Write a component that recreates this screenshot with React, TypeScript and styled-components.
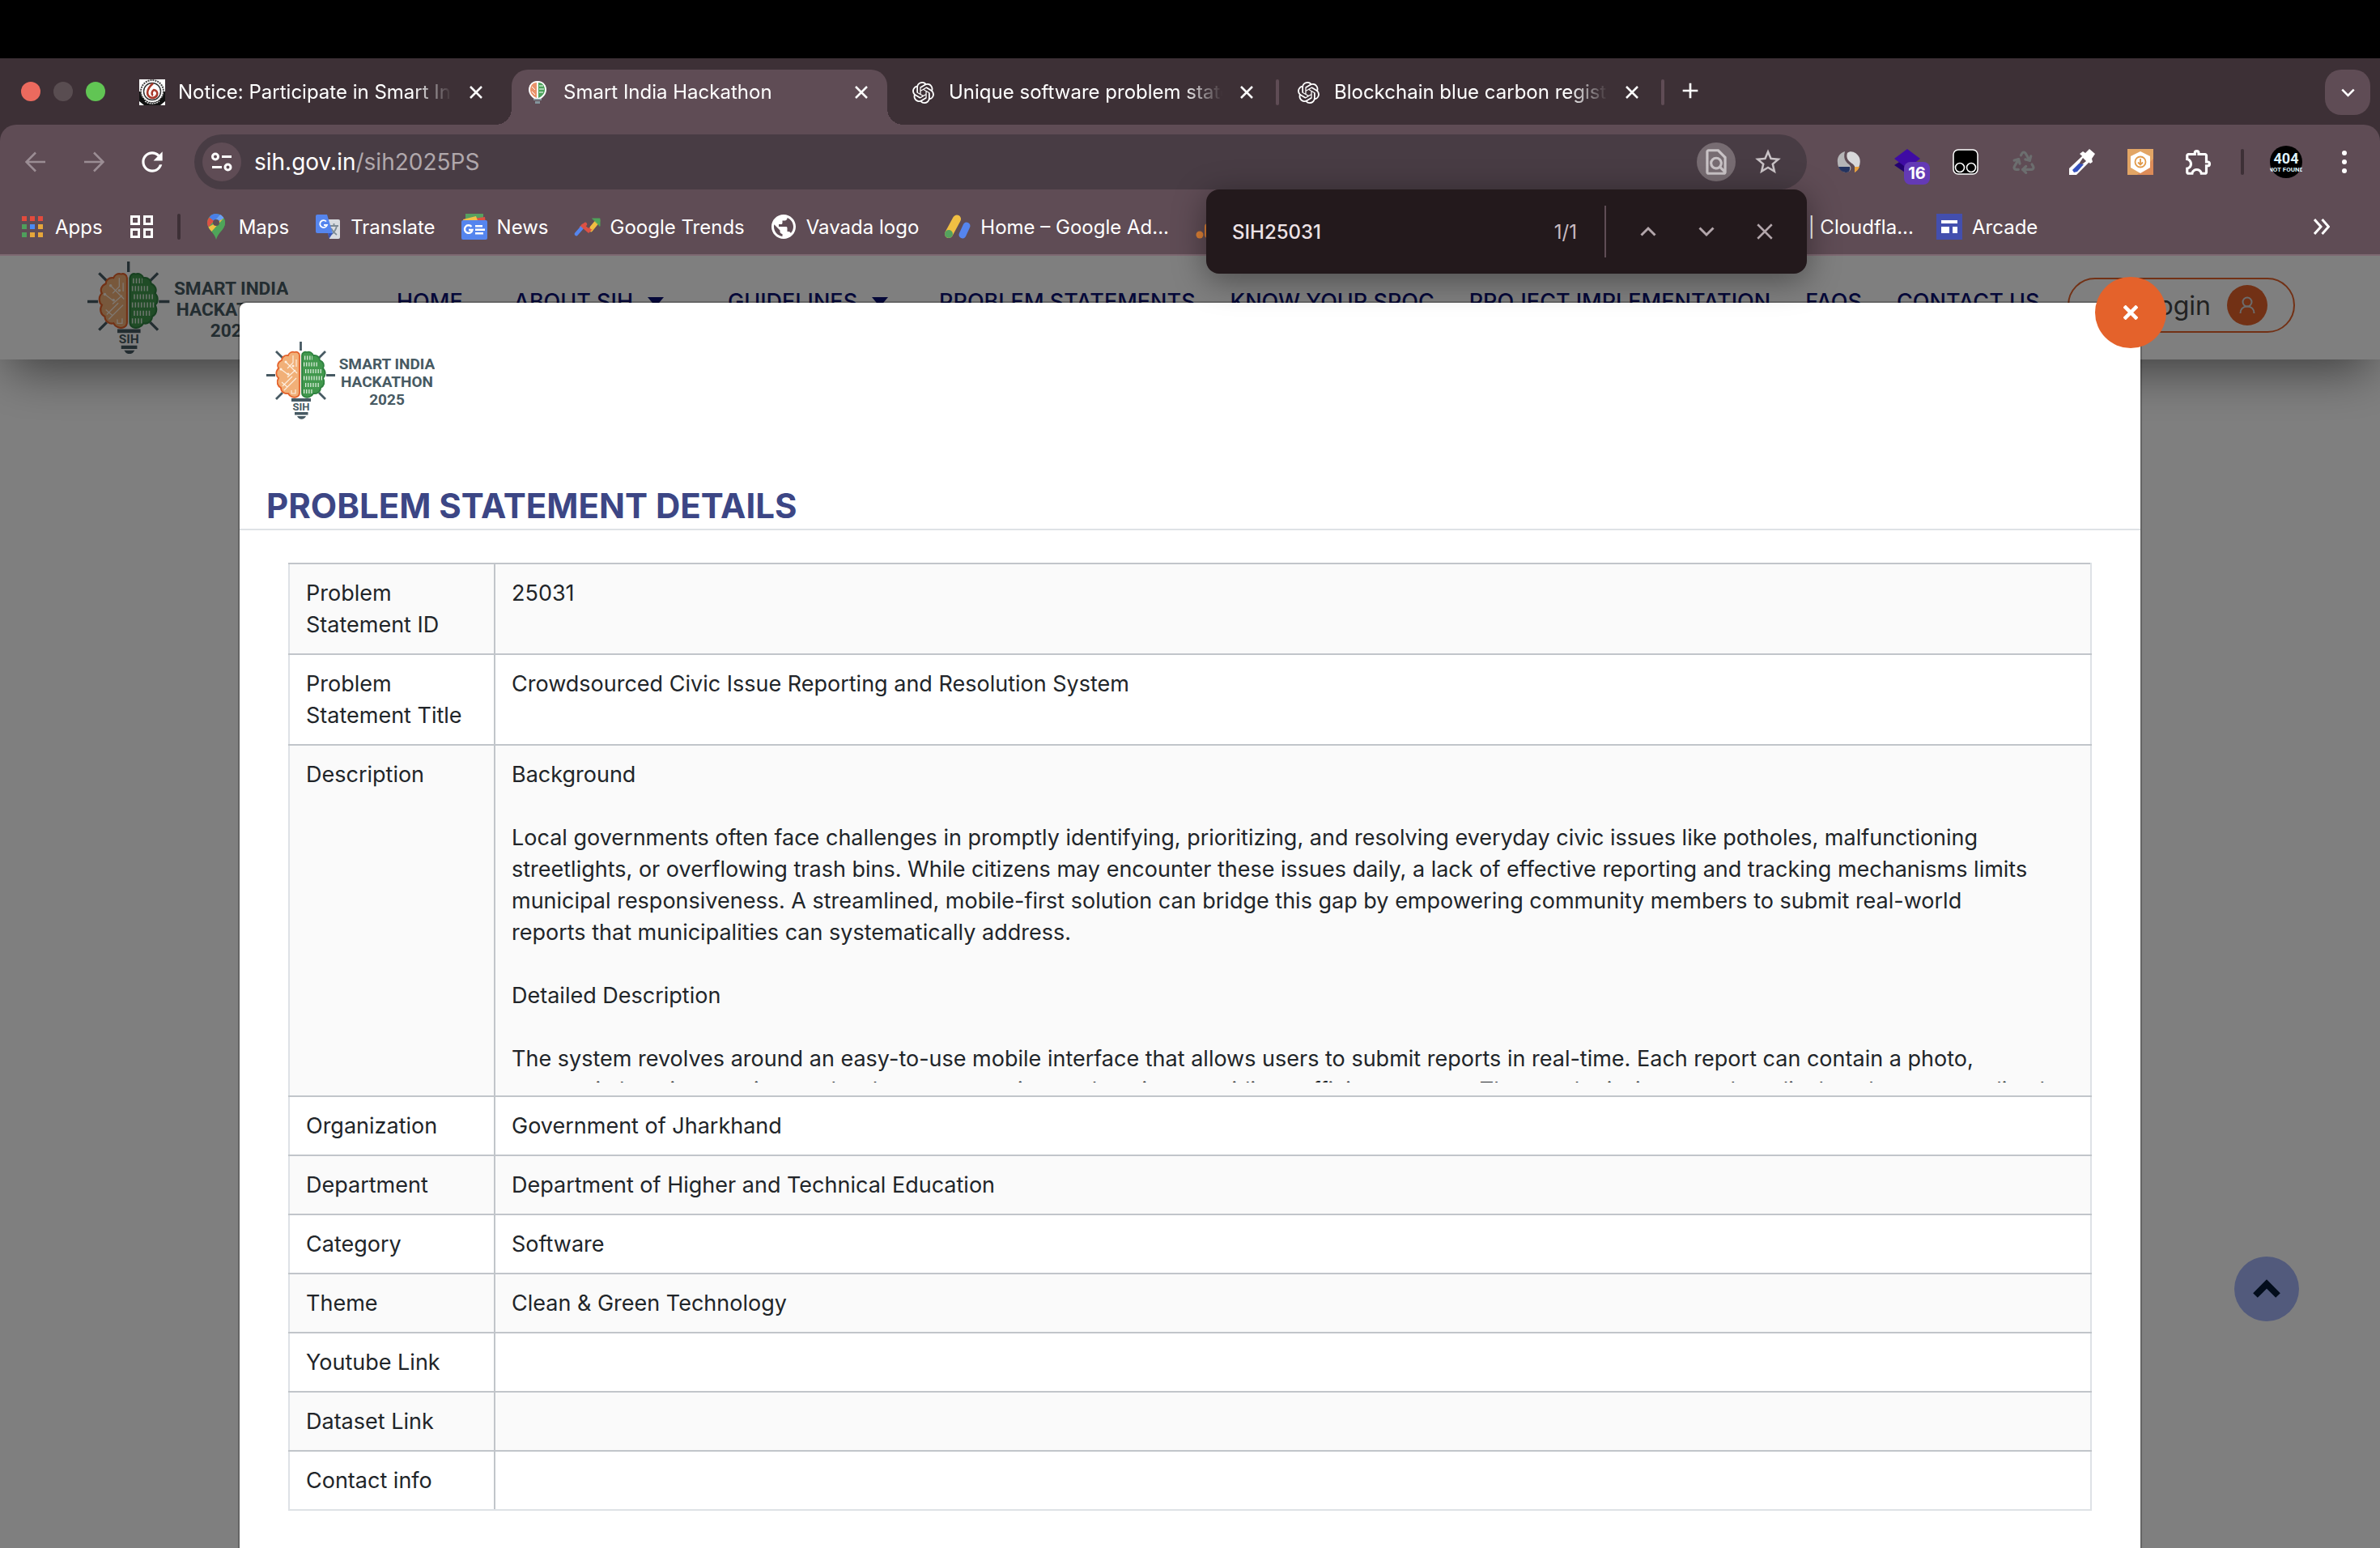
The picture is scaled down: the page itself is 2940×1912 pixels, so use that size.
import React from "react";
import styled, { createGlobalStyle, css } from "styled-components";
import { MdAdd, MdOutlineFindInPage, MdPublic, MdRefresh, MdStarBorder, MdOutlineExtension } from "react-icons/md";
import { SiOpenai } from "react-icons/si";
import { Recycle } from "lucide-react";

const color = {
  strip: "#3d3036",
  bar: "#5f4c55",
  field: "#483c44",
  find: "#23191c",
  line: "#c1c5ca",
  softLine: "#dee2e6",
  ink: "#212529",
  navy: "#0a1172",
  orange: "#e4622b",
};

const GlobalStyle = createGlobalStyle`
  *, *::before, *::after { box-sizing: border-box; }
  body {
    margin: 0;
    background: #000;
    font-family: Inter, "Liberation Sans", sans-serif;
    overflow: hidden;
  }
  button, input { font: inherit; color: inherit; }
  svg { display: block; flex: none; }
`;

const Screen = styled.div`
  height: 100vh;
  display: flex;
  flex-direction: column;
  padding-top: 72px;
`;

const bareButton = css`
  border: 0;
  padding: 0;
  margin: 0;
  background: none;
  display: flex;
  align-items: center;
  justify-content: center;
  flex: none;
`;

/* ---------- browser window ---------- */

const Browser = styled.header`
  position: relative;
  z-index: 2;
  background: ${color.strip};
  color: #fff;
  font-size: 24px;
`;

const TabStrip = styled.div`
  height: 82px;
  display: flex;
  align-items: flex-end;
  padding: 0 12px 0 26px;
`;

const Lights = styled.div`
  height: 82px;
  width: 130px;
  display: flex;
  align-items: center;
  gap: 16px;
`;

const Light = styled.button<{ $fill: string }>`
  ${bareButton}
  width: 24px;
  height: 24px;
  border-radius: 50%;
  background: ${(p) => p.$fill};
`;

const Tab = styled.div<{ $active?: boolean }>`
  position: relative;
  width: 464px;
  height: 68px;
  padding: 0 22px 12px 16px;
  display: flex;
  align-items: center;
  border-radius: 20px 20px 0 0;
  background: ${(p) => (p.$active ? color.bar : "transparent")};
  ${(p) =>
    p.$active &&
    css`
      &::before,
      &::after {
        content: "";
        position: absolute;
        bottom: 0;
        width: 20px;
        height: 20px;
      }
      &::before {
        right: 100%;
        background: radial-gradient(circle at 0 0, transparent 20px, ${color.bar} 20px);
      }
      &::after {
        left: 100%;
        background: radial-gradient(circle at 100% 0, transparent 20px, ${color.bar} 20px);
      }
    `}
`;

const TabTitle = styled.a`
  flex: 1;
  min-width: 0;
  margin: 0 20px 0 16px;
  color: #fff;
  text-decoration: none;
  white-space: nowrap;
  overflow: hidden;
  line-height: 32px;
  mask-image: linear-gradient(to right, #000 calc(100% - 48px), transparent);
`;

const IconBox = styled.span`
  width: 32px;
  height: 32px;
  flex: none;
  display: flex;
  align-items: center;
  justify-content: center;
`;

const SmallButton = styled.button`
  ${bareButton}
  width: 20px;
  height: 32px;
`;

const TabGap = styled.span<{ $visible?: boolean }>`
  width: 4px;
  height: 32px;
  margin: 0 4px 24px;
  border-radius: 2px;
  background: ${(p) => (p.$visible ? color.bar : "transparent")};
`;

const NewTab = styled.button`
  ${bareButton}
  width: 56px;
  height: 56px;
  margin-bottom: 14px;
`;

const TabSearch = styled.button`
  ${bareButton}
  width: 56px;
  height: 56px;
  margin: 0 0 12px auto;
  border-radius: 20px;
  background: ${color.bar};
`;

const Toolbar = styled.div`
  height: 92px;
  display: flex;
  align-items: center;
  padding: 0 24px 0 8px;
  border-radius: 20px 20px 0 0;
  background: ${color.bar};
`;

const NavButton = styled.button<{ $dim?: boolean }>`
  ${bareButton}
  width: 72px;
  height: 68px;
  color: ${(p) => (p.$dim ? "#9b8d94" : "#fff")};
`;

const AddressField = styled.div`
  flex: 1;
  height: 68px;
  margin: 0 16px;
  padding: 0 30px 0 10px;
  display: flex;
  align-items: center;
  border-radius: 34px;
  background: ${color.field};
`;

const RoundButton = styled.button<{ $fill?: string }>`
  ${bareButton}
  width: 48px;
  height: 48px;
  border-radius: 50%;
  color: #c9c3c6;
  background: ${(p) => p.$fill || "transparent"};
`;

const Address = styled.a`
  flex: 1;
  margin-left: 16px;
  font-size: 28px;
  color: #fff;
  text-decoration: none;
  span { color: #b0a8ac; }
`;

const FieldActions = styled.div`
  display: flex;
  align-items: center;
  gap: 22px;
  button:last-child { width: 36px; }
`;

const Extensions = styled.div`
  display: flex;
  align-items: center;
  margin-right: 16px;
`;

const Extension = styled.button`
  ${bareButton}
  position: relative;
  width: 72px;
  height: 68px;
`;

const Badge = styled.span`
  position: absolute;
  left: 32px;
  top: 34px;
  width: 32px;
  height: 28px;
  border-radius: 8px;
  background: #643ab5;
  font-size: 20px;
  line-height: 28px;
  font-weight: 700;
  text-align: center;
`;

const BarDivider = styled.span`
  width: 4px;
  height: 32px;
  border-radius: 2px;
  background: ${color.strip};
`;

const Profile = styled.button`
  ${bareButton}
  width: 104px;
  height: 68px;
`;

const MenuButton = styled.button`
  ${bareButton}
  width: 40px;
  height: 68px;
`;

const BookmarkBar = styled.nav`
  height: 70px;
  display: flex;
  align-items: center;
  padding: 0 62px 0 24px;
  background: ${color.bar};
  border-bottom: 2px solid #7e6972;
`;

const BookmarkGroup = styled.div`
  display: flex;
  align-items: center;
  gap: 32px;
`;

const BookmarkDivider = styled(BarDivider)`
  margin: 0 28px;
`;

const Bookmark = styled.a`
  display: flex;
  align-items: center;
  gap: 12px;
  color: #fff;
  text-decoration: none;
  white-space: nowrap;
`;

const BookmarkLabel = styled.span<{ $width?: number }>`
  width: ${(p) => (p.$width ? `${p.$width}px` : "auto")};
  text-align: right;
`;

const Overflow = styled.button`
  ${bareButton}
  width: 20px;
  height: 32px;
  margin-left: auto;
`;

const FindBar = styled.form`
  position: absolute;
  top: 162px;
  right: 708px;
  width: 742px;
  height: 104px;
  display: flex;
  align-items: center;
  padding: 0 16px 0 32px;
  border-radius: 16px;
  background: ${color.find};
  box-shadow: 0 8px 40px rgba(0, 0, 0, 0.4);
`;

const FindInput = styled.input`
  flex: 1;
  min-width: 0;
  border: 0;
  padding: 0;
  outline: 0;
  background: none;
  color: #eee3e6;
  font-weight: 500;
`;

const FindCount = styled.output`
  color: #c9bcc1;
`;

const FindDivider = styled.span`
  width: 2px;
  height: 64px;
  margin: 0 16px 0 34px;
  background: ${color.bar};
`;

const FindButton = styled.button`
  ${bareButton}
  width: 72px;
  height: 64px;
`;

/* ---------- web page ---------- */

const Page = styled.main`
  position: relative;
  flex: 1;
  min-height: 0;
  overflow: hidden;
  background: #fff;
`;

const SiteHeader = styled.div`
  height: 128px;
  display: flex;
  align-items: flex-start;
  padding: 7px 105px 0 108px;
  background: #fff;
  box-shadow: 0 25px 60px -12px rgba(0, 0, 0, 0.5);
`;

const SiteNav = styled.nav`
  flex: 1;
  min-width: 0;
  display: flex;
  gap: 43px;
  margin: 34px 0 0 134px;
`;

const NavLink = styled.a<{ $after?: number }>`
  display: flex;
  align-items: center;
  gap: 18px;
  margin-right: ${(p) => p.$after || 0}px;
  font-size: 27px;
  font-weight: 500;
  line-height: 32px;
  color: ${color.navy};
  text-decoration: none;
  white-space: nowrap;
`;

const Caret = styled.span`
  border: 10px solid transparent;
  border-top: 12px solid ${color.navy};
  border-bottom: 0;
`;

const Login = styled.a`
  width: 281px;
  height: 68px;
  margin-top: 20px;
  padding-right: 32px;
  flex: none;
  display: flex;
  align-items: center;
  justify-content: flex-end;
  gap: 20px;
  border: 2px solid ${color.orange};
  border-radius: 34px;
  font-size: 32px;
  color: #444;
  text-decoration: none;
`;

const LoginBadge = styled.span`
  width: 50px;
  height: 50px;
  border-radius: 50%;
  display: flex;
  align-items: center;
  justify-content: center;
  background: ${color.orange};
`;

const BackToTop = styled.a`
  position: absolute;
  right: 100px;
  bottom: 280px;
  width: 80px;
  height: 80px;
  border-radius: 50%;
  display: flex;
  align-items: center;
  justify-content: center;
  background: #a5b5f8;
`;

const Backdrop = styled.div`
  position: absolute;
  inset: 0;
  padding-top: 56px;
  background: rgba(0, 0, 0, 0.5);
`;

const Dialog = styled.section`
  position: relative;
  width: 80%;
  min-height: calc(100% + 40px);
  margin: 0 auto;
  border: 2px solid rgba(0, 0, 0, 0.2);
  border-radius: 10px;
  background: #fff;
  background-clip: padding-box;
`;

const DialogHeader = styled.div`
  padding: 48px 33px 4px;
  border-bottom: 2px solid ${color.softLine};
`;

const DialogTitle = styled.h2`
  margin: 83px 0 0;
  font-size: 42px;
  line-height: 48px;
  font-weight: 700;
  color: #3c4685;
`;

const CloseDialog = styled.button`
  ${bareButton}
  position: absolute;
  top: -32px;
  right: -32px;
  width: 88px;
  height: 88px;
  border-radius: 50%;
  background: ${color.orange};
`;

const DialogBody = styled.div`
  padding: 40px 60px;
`;

const Details = styled.table`
  width: 100%;
  border-collapse: collapse;
  table-layout: fixed;
  font-size: 27px;
  line-height: 39px;
  color: ${color.ink};
  tr:nth-child(odd) { background: #fafafa; }
  th, td {
    height: 73px;
    padding: 16px 20px;
    border: 2px solid ${color.line};
    font-weight: 400;
    text-align: left;
    vertical-align: top;
  }
  th { width: 254px; border-left-color: ${color.softLine}; }
  td { border-right-color: ${color.softLine}; }
  tr:last-child > * { border-bottom-color: ${color.softLine}; }
`;

const Description = styled.div`
  max-height: 400px;
  overflow: hidden;
  white-space: pre;
`;

/* ---------- drawings ---------- */

const CloseGlyph = ({ size = 16, stroke = "#fff", weight = 2.5 }: { size?: number; stroke?: string; weight?: number }) => (
  <svg width={size} height={size} viewBox="0 0 16 16" stroke={stroke} strokeWidth={weight} fill="none">
    <path d="M1 1l14 14M15 1L1 15" />
  </svg>
);

const Chevron = ({ down, stroke = "#fff", size = 20, weight = 3 }: { down?: boolean; stroke?: string; size?: number; weight?: number }) => (
  <svg width={size} height={size} viewBox="0 0 20 20" stroke={stroke} strokeWidth={weight} fill="none">
    <path d={down ? "M1.5 5.5l8.500 8.500 8.500-8.500" : "M1.500 14.500L10 6l8.500 8.500"} />
  </svg>
);

const Arrow = ({ right }: { right?: boolean }) => (
  <svg width="26" height="26" viewBox="0 0 26 26" stroke="currentColor" strokeWidth="2.6" fill="none">
    <path d={right ? "M1 13h23M13 1.500L24.500 13 13 24.500" : "M25 13H2M13 1.500L1.500 13 13 24.500"} />
  </svg>
);

const brain =
  "M41 17C41 14 38 12 35 13 31 12 28 14 27 17 22 16 19 20 19 23 14 25 13 30 15 33 11 37 12 43 15 45 12 50 14 55 18 57 18 62 23 65 27 64 29 68 34 70 38 68 40 67 41 65 41 63Z";

const SihBulb = () => (
  <>
    <g stroke="#475a63" strokeWidth="2.8">
      <path d="M42.500 0v11M0 41.500h11M74 41.500h11M12 12l8 8M73 12l-8 8M12 71l8-8M73 71l-8-8" />
    </g>
    <path d={brain} fill="#f1b078" stroke={color.orange} strokeWidth="1.8" />
    <path d="M33 17v9l-7 7M37 22v9M24 25l5 5 9 9M18 34l8 6M19 50l7 6M22 60l15-15M20 55l12-12M26 44l10-9M31 60v4h5v-5" stroke="#fdf0e2" strokeWidth="1.1" fill="none" />
    <g fill="#fdf0e2">
      <circle cx="24" cy="25" r="1.500" /><circle cx="18" cy="34" r="1.500" /><circle cx="33" cy="30" r="1.500" /><circle cx="27" cy="40" r="1.500" />
    </g>
    <path d={brain} transform="translate(85 0) scale(-1 1)" fill="#41984d" stroke="#2f8140" strokeWidth="1.800" />
    <g stroke="#d9ecd9" strokeWidth="5.200" strokeDasharray="1.300 1.800">
      <path d="M47 20h10M46 28h18M48 36.500h20M46 45h24M48 53.500h17M46 61.500h12" />
    </g>
    <path d="M31 70h24v4H31zM35 87h16.500v3.500H35zM38 92h11q-2 3.800-5.500 3.800T38 92z" fill="#475a63" />
  </>
);

const SihLogo = ({ width }: { width: number }) => (
  <svg width={width} viewBox="0 0 208 96" role="img" aria-label="Smart India Hackathon 2025">
    <SihBulb />
    <g fill="#475a63" fontFamily="Roboto, sans-serif" fontWeight="700" fontSize="19" textAnchor="middle">
      <text x="43" y="85" fontSize="13">SIH</text>
      <text x="149" y="34">SMART INDIA</text>
      <text x="149" y="56">HACKATHON</text>
      <text x="149" y="78">2025</text>
    </g>
  </svg>
);

const CollegeIcon = () => (
  <svg width="32" height="32" viewBox="0 0 32 32">
    <path fill="#fff" d="M0 0h32v32H0z" />
    <path fill="#111" d="M0 15h32v12l-6 5H6l-6-5z" />
    <circle cx="16" cy="15" r="14" fill="#fff" stroke="#444" strokeWidth="2" strokeDasharray="2 1" />
    <circle cx="16" cy="15" r="10.500" fill="#fff" stroke="#333" strokeWidth="1.500" />
    <path d="M17 5c-9 8-9 16-1 18 8-1 8-9 2-10-3 2-3 6-1 7" fill="none" stroke="#a8392b" strokeWidth="2.600" />
    <path d="M4 22c4 9 20 9 24 0l2 4-5 6H7l-5-6z" fill="#111" />
    <path d="M7 27c6 4 12 4 18 0" stroke="#ddd" strokeWidth="1.500" strokeDasharray="2 1" fill="none" />
  </svg>
);

const BulbIcon = () => (
  <svg width="32" height="32" viewBox="0 0 32 32">
    <path d="M16 2C8 2 5 8 5 13s4 9 7 11h8c3-2 7-6 7-11S24 2 16 2z" fill="#fff" />
    <path d="M15 4C9 4 7 9 7 13s3 8 8 10z" fill="#e8926a" />
    <path d="M17 4c6 0 8 5 8 9s-3 8-8 10z" fill="#4da35c" />
    <path d="M18 8h5M18 12h6M18 16h5M9 9l4 4M9 15l4 4" stroke="#fff" strokeWidth="1" />
    <path d="M11 24h10v2H11zM13 27h6v3h-6z" fill="#83959c" />
  </svg>
);

const AppsIcon = () => (
  <svg width="26" height="26" viewBox="0 0 26 26">
    {["#e24b3d", "#e24b3d", "#e24b3d", "#4f9f5c", "#4a8af4", "#e6a63a", "#4f9f5c", "#e6a63a", "#e6a63a"].map((fill, i) => (
      <rect key={i} x={(i % 3) * 10} y={Math.floor(i / 3) * 10} width="6" height="6" fill={fill} />
    ))}
  </svg>
);

const TabGroupsIcon = () => (
  <svg width="28" height="28" viewBox="0 0 28 28" fill="none" stroke="#fff" strokeWidth="3">
    <path d="M1.500 1.500h9v9h-9zM17.500 1.500h9v9h-9zM1.500 17.500h9v9h-9zM17.500 17.500h9v9h-9z" />
  </svg>
);

const MapsIcon = () => (
  <svg width="22" height="32" viewBox="0 0 22 32">
    <path d="M11 0C5 0 0 5 0 11c0 9 9 12 11 21 2-9 11-12 11-21C22 5 17 0 11 0z" fill="#4fa55a" />
    <path d="M11 0C7 0 4 2 2.500 4.500l6 5L16 1z" fill="#4a7fe8" />
    <path d="M16 1l-7.500 8.500L11 11l9.500-5.500C19.500 3.500 18 2 16 1z" fill="#6ba0f4" />
    <path d="M2.500 4.500C1 6.500 0 8.500 0 11c0 2 .500 4 1.500 5.500L8.500 9z" fill="#dd5144" />
    <path d="M1.500 16.500c1 2 2.500 4 4 5.500L20 6l-9 5z" fill="#f2bf42" />
    <path d="M20.500 5.500C21.500 7 22 9 22 11c0 7-6 10-8.500 14.500L6 21.500z" fill="#4fa55a" />
    <circle cx="11" cy="11" r="4" fill="#5f4c55" />
  </svg>
);

const TranslateIcon = () => (
  <svg width="32" height="32" viewBox="0 0 32 32">
    <path d="M12 7h17a2 2 0 012 2v20a2 2 0 01-2 2H18z" fill="#d9dce0" />
    <path d="M18 15h11M23.500 12v3M27 15c-1 5-4 9-8 11M20 18c2 4 4 6 7 8" stroke="#7d8b95" strokeWidth="1.800" fill="none" />
    <path d="M16 24h6l-4.500 7z" fill="#3a55b5" />
    <path d="M3 1h12l7 23H3a2 2 0 01-2-2V3a2 2 0 012-2z" fill="#5585ee" />
    <path d="M14 9.500a4.500 4.500 0 101 4.500h-4" stroke="#fff" strokeWidth="1.800" fill="none" />
  </svg>
);

const NewsIcon = () => (
  <svg width="32" height="32" viewBox="0 0 32 32">
    <path d="M5 0h22v10H5z" fill="#56a15f" />
    <path d="M14 6l15-2 1 8H14z" fill="#dd5144" />
    <path d="M2 7l16-4 3 8H3z" fill="#f2c04a" />
    <rect y="8" width="32" height="24" rx="2" fill="#5585ee" />
    <path d="M12.500 16a4.800 4.800 0 101 4h-4.500" stroke="#fff" strokeWidth="2.400" fill="none" />
    <path d="M17 14h9v2.600h-9zM17 18.500h12v2.600H17zM17 23h10v2.600H17z" fill="#fff" />
  </svg>
);

const TrendsIcon = () => (
  <svg width="34" height="32" viewBox="0 0 34 32" fill="none" strokeWidth="4.500" strokeLinecap="round">
    <path d="M21 20l9-11" stroke="#f0bd42" />
    <path d="M9 17l5-4" stroke="#dd5144" />
    <path d="M3 25l7-8" stroke="#5585ee" />
    <path d="M11 15l7 6 4-4" stroke="#dd5144" />
    <path d="M22 17l5-6" stroke="#f0bd42" />
    <path d="M23 6h9v9z" fill="#4fa55a" stroke="#4fa55a" strokeWidth="1" />
  </svg>
);

const AdsIcon = () => (
  <svg width="34" height="32" viewBox="0 0 34 32" fill="none" strokeLinecap="round" strokeWidth="10">
    <path d="M16 6.500L6 25" stroke="#f0bf43" />
    <path d="M28 15l-5 11" stroke="#5585ee" strokeWidth="9" />
    <circle cx="6" cy="25" r="5" fill="#55a25e" />
  </svg>
);

const AnalyticsIcon = () => (
  <svg width="32" height="32" viewBox="0 0 32 32" fill="#dd8035">
    <circle cx="6" cy="26" r="4.500" /><rect x="12" y="12" width="9" height="18" rx="4" /><rect x="23" y="2" width="9" height="28" rx="4" />
  </svg>
);

const ArcadeIcon = () => (
  <svg width="32" height="32" viewBox="0 0 32 32">
    <path fill="#434fae" d="M0 0h32v32H0z" />
    <path fill="#fff" d="M6 8h20v4H6zM6 16h10v8H6zM20 16h6v8h-6z" />
  </svg>
);

const SiteInfoIcon = () => (
  <svg width="26" height="24" viewBox="0 0 26 24" fill="none" stroke="#fff" strokeWidth="3">
    <circle cx="5" cy="5.500" r="3.500" /><path d="M13 5.500h12M1 18.500h12" /><circle cx="20.500" cy="18.500" r="3.500" />
  </svg>
);

const SimilarIcon = () => (
  <svg width="30" height="28" viewBox="0 0 30 28">
    <path d="M10 1C3 3 0 9 1 15c0 6 5 12 11 12 5-1 7-5 4-9-3-3-9-6-6-17z" fill="#b5b5b7" />
    <path d="M2 20h14c1 4-1 7-4 7-4 0-8-2-10-7z" fill="#24335f" />
    <path d="M13 3c4-4 12-1 15 6 2 6 0 13-6 18 1-5 1-8-3-11-5-3-8-7-6-13z" fill="#d8d8da" />
    <path d="M22 20h6c-1 3-3 5-6 7z" fill="#e9a13c" />
  </svg>
);

const LayersIcon = () => (
  <svg width="32" height="32" viewBox="0 0 32 32">
    <path d="M0 20l16-10 16 10-16 11z" fill="#230070" />
    <path d="M0 12L16 0l16 12-16 12z" fill="#3f0ba4" />
  </svg>
);

const TamperIcon = () => (
  <svg width="32" height="32" viewBox="0 0 32 32" stroke="#fff">
    <rect x="1" y="1" width="30" height="30" rx="6" strokeWidth="1.500" />
    <circle cx="9" cy="23" r="5.500" strokeWidth="1.600" /><circle cx="23" cy="23" r="5.500" strokeWidth="1.600" />
  </svg>
);

const DropperIcon = () => (
  <svg width="32" height="32" viewBox="0 0 32 32">
    <path d="M17 8l8 8L9 32H0v-8z" fill="#fff" />
    <path d="M17 11l4 4-5 4-5 1z" fill="#5f4c55" />
    <path d="M12 18l6 1-8 9-4 1-2-3z" fill="#3450bd" />
    <path d="M13 6l4-3 3 2 5-5 7 6-4 6 1 4-3 2z" fill="#fff" />
  </svg>
);

const HoneyIcon = () => (
  <svg width="32" height="32" viewBox="0 0 32 32">
    <path fill="#e2a565" d="M0 0h32v32H0z" /><path fill="#dc8b58" d="M32 12v20H12z" />
    <path d="M16 3l12 6v14l-12 7-12-7V9z" fill="#fff" />
    <circle cx="16" cy="16" r="6.500" fill="none" stroke="#e19a4b" strokeWidth="1.800" />
    <path d="M16 12v7M13 16.500l3 3 3-3" fill="none" stroke="#e19a4b" strokeWidth="1.800" />
  </svg>
);

const ProfileIcon = () => (
  <svg width="40" height="40" viewBox="0 0 40 40">
    <circle cx="20" cy="20" r="20" />
    <g fill="#dff3fb" textAnchor="middle" fontFamily="Roboto, sans-serif" fontWeight="700">
      <text x="20" y="22" fontSize="18">404</text>
      <text x="20" y="32" fontSize="8">NOT FOUND</text>
    </g>
  </svg>
);

const PersonIcon = () => (
  <svg width="20" height="22" viewBox="0 0 20 22" fill="none" stroke="#d9d9d9" strokeWidth="2">
    <circle cx="10" cy="7" r="5.500" /><path d="M1.500 21c0-5 3-8.500 8.500-8.500s8.500 3.500 8.500 8.500" />
  </svg>
);

/* ---------- content ---------- */

const tabs = [
  { title: "Notice: Participate in Smart India Hackathon", icon: <CollegeIcon /> },
  { title: "Smart India Hackathon", icon: <BulbIcon />, active: true },
  { title: "Unique software problem statements", icon: <SiOpenai size={27} />, gap: true },
  { title: "Blockchain blue carbon registry", icon: <SiOpenai size={27} />, gap: true },
];

const bookmarks: { label: string; icon: React.ReactNode; width?: number }[] = [
  { label: "Maps", icon: <MapsIcon /> },
  { label: "Translate", icon: <TranslateIcon /> },
  { label: "News", icon: <NewsIcon /> },
  { label: "Google Trends", icon: <TrendsIcon /> },
  { label: "Vavada logo", icon: <MdPublic size={36} /> },
  { label: "Home – Google Ad...", icon: <AdsIcon /> },
  { label: "Analytics | Home", icon: <AnalyticsIcon />, width: 232 },
  { label: "Console", icon: <MdPublic size={36} />, width: 224 },
  { label: "Domains | Cloudfla...", icon: <MdPublic size={36} />, width: 232 },
  { label: "Arcade", icon: <ArcadeIcon /> },
];

const extensions = [
  { name: "Similar sites", icon: <SimilarIcon /> },
  { name: "Layers", icon: <LayersIcon />, badge: "16" },
  { name: "Scripts", icon: <TamperIcon /> },
  { name: "Recycle", icon: <Recycle size={32} color="#6c6e6f" strokeWidth={2.4} /> },
  { name: "Colour picker", icon: <DropperIcon /> },
  { name: "Downloads", icon: <HoneyIcon /> },
  { name: "Extensions", icon: <MdOutlineExtension size={38} /> },
];

const siteLinks = [
  { label: "HOME", after: 20 },
  { label: "ABOUT SIH", caret: true, after: 36 },
  { label: "GUIDELINES", caret: true, after: 20 },
  { label: "PROBLEM STATEMENTS" },
  { label: "KNOW YOUR SPOC" },
  { label: "PROJECT IMPLEMENTATION" },
  { label: "FAQS" },
  { label: "CONTACT US" },
];

const description = `Background

Local governments often face challenges in promptly identifying, prioritizing, and resolving everyday civic issues like potholes, malfunctioning
streetlights, or overflowing trash bins. While citizens may encounter these issues daily, a lack of effective reporting and tracking mechanisms limits
municipal responsiveness. A streamlined, mobile-first solution can bridge this gap by empowering community members to submit real-world
reports that municipalities can systematically address.

Detailed Description

The system revolves around an easy-to-use mobile interface that allows users to submit reports in real-time. Each report can contain a photo,
automatic location tagging, and a short text or voice explanation, providing sufficient context. These submissions are then displayed on a centralized`;

const rows: [string, React.ReactNode][] = [
  ["Problem Statement ID", "25031"],
  ["Problem Statement Title", "Crowdsourced Civic Issue Reporting and Resolution System"],
  ["Description", <Description key="d">{description}</Description>],
  ["Organization", "Government of Jharkhand"],
  ["Department", "Department of Higher and Technical Education"],
  ["Category", "Software"],
  ["Theme", "Clean & Green Technology"],
  ["Youtube Link", ""],
  ["Dataset Link", ""],
  ["Contact info", ""],
];

export default function App() {
  return (
    <Screen>
      <GlobalStyle />
      <Browser>
        <TabStrip>
          <Lights>
            <Light $fill="#ec6a5e" aria-label="Close window" />
            <Light $fill="#594d51" aria-label="Minimise window" />
            <Light $fill="#61c554" aria-label="Zoom window" />
          </Lights>
          {tabs.map((tab) => (
            <React.Fragment key={tab.title}>
              <Tab $active={tab.active}>
                <IconBox>{tab.icon}</IconBox>
                <TabTitle href="#">{tab.title}</TabTitle>
                <SmallButton aria-label="Close tab"><CloseGlyph /></SmallButton>
              </Tab>
              <TabGap $visible={tab.gap} />
            </React.Fragment>
          ))}
          <NewTab aria-label="New tab"><MdAdd size={32} /></NewTab>
          <TabSearch aria-label="Search tabs"><Chevron down size={17} /></TabSearch>
        </TabStrip>

        <Toolbar>
          <NavButton $dim aria-label="Back"><Arrow /></NavButton>
          <NavButton $dim aria-label="Forward"><Arrow right /></NavButton>
          <NavButton aria-label="Reload"><MdRefresh size={38} /></NavButton>
          <AddressField>
            <RoundButton $fill={color.bar} aria-label="Site information"><SiteInfoIcon /></RoundButton>
            <Address href="#">sih.gov.in<span>/sih2025PS</span></Address>
            <FieldActions>
              <RoundButton $fill="#776c72" aria-label="Find in page"><MdOutlineFindInPage size={38} /></RoundButton>
              <RoundButton aria-label="Bookmark this tab"><MdStarBorder size={38} /></RoundButton>
            </FieldActions>
          </AddressField>
          <Extensions>
            {extensions.map((ext) => (
              <Extension key={ext.name} aria-label={ext.name}>
                {ext.icon}
                {ext.badge && <Badge>{ext.badge}</Badge>}
              </Extension>
            ))}
          </Extensions>
          <BarDivider />
          <Profile aria-label="Profile"><ProfileIcon /></Profile>
          <MenuButton aria-label="Menu">
            <svg width="6" height="28" viewBox="0 0 6 28" fill="#fff">
              <circle cx="3" cy="3" r="3" /><circle cx="3" cy="14" r="3" /><circle cx="3" cy="25" r="3" />
            </svg>
          </MenuButton>
        </Toolbar>

        <BookmarkBar>
          <BookmarkGroup>
            <Bookmark href="#"><IconBox><AppsIcon /></IconBox>Apps</Bookmark>
            <Bookmark href="#" aria-label="Tab groups"><IconBox><TabGroupsIcon /></IconBox></Bookmark>
          </BookmarkGroup>
          <BookmarkDivider />
          <BookmarkGroup>
            {bookmarks.map((b) => (
              <Bookmark href="#" key={b.label}>
                <IconBox>{b.icon}</IconBox>
                <BookmarkLabel $width={b.width}>{b.label}</BookmarkLabel>
              </Bookmark>
            ))}
          </BookmarkGroup>
          <Overflow aria-label="More bookmarks">
            <svg width="20" height="22" viewBox="0 0 20 22" fill="none" stroke="#fff" strokeWidth="3">
              <path d="M1 2l8 9-8 9M10.500 2l8 9-8 9" />
            </svg>
          </Overflow>
        </BookmarkBar>

        <FindBar onSubmit={(e) => e.preventDefault()}>
          <FindInput aria-label="Find in page" defaultValue="SIH25031" />
          <FindCount>1/1</FindCount>
          <FindDivider />
          <FindButton type="button" aria-label="Previous"><Chevron stroke="#b3a6ab" /></FindButton>
          <FindButton type="button" aria-label="Next"><Chevron down stroke="#b3a6ab" /></FindButton>
          <FindButton type="button" aria-label="Close find bar"><CloseGlyph size={20} stroke="#b3a6ab" weight={2} /></FindButton>
        </FindBar>
      </Browser>

      <Page>
        <SiteHeader>
          <SihLogo width={248} />
          <SiteNav>
            {siteLinks.map((link) => (
              <NavLink href="#" key={link.label} $after={link.after}>
                {link.label}
                {link.caret && <Caret />}
              </NavLink>
            ))}
          </SiteNav>
          <Login href="#">
            Login
            <LoginBadge><PersonIcon /></LoginBadge>
          </Login>
        </SiteHeader>
        <BackToTop href="#" aria-label="Back to top">
          <svg width="34" height="24" viewBox="0 0 34 24" fill="none" stroke="#061a38" strokeWidth="8">
            <path d="M3 20L17 6l14 14" />
          </svg>
        </BackToTop>
        <Backdrop>
          <Dialog role="dialog" aria-labelledby="dialog-title">
            <DialogHeader>
              <SihLogo width={208} />
              <DialogTitle id="dialog-title">PROBLEM STATEMENT DETAILS</DialogTitle>
            </DialogHeader>
            <DialogBody>
              <Details>
                <tbody>
                  {rows.map(([label, value]) => (
                    <tr key={label}>
                      <th scope="row">{label}</th>
                      <td>{value}</td>
                    </tr>
                  ))}
                </tbody>
              </Details>
            </DialogBody>
            <CloseDialog aria-label="Close"><CloseGlyph size={18} weight={4} /></CloseDialog>
          </Dialog>
        </Backdrop>
      </Page>
    </Screen>
  );
}
